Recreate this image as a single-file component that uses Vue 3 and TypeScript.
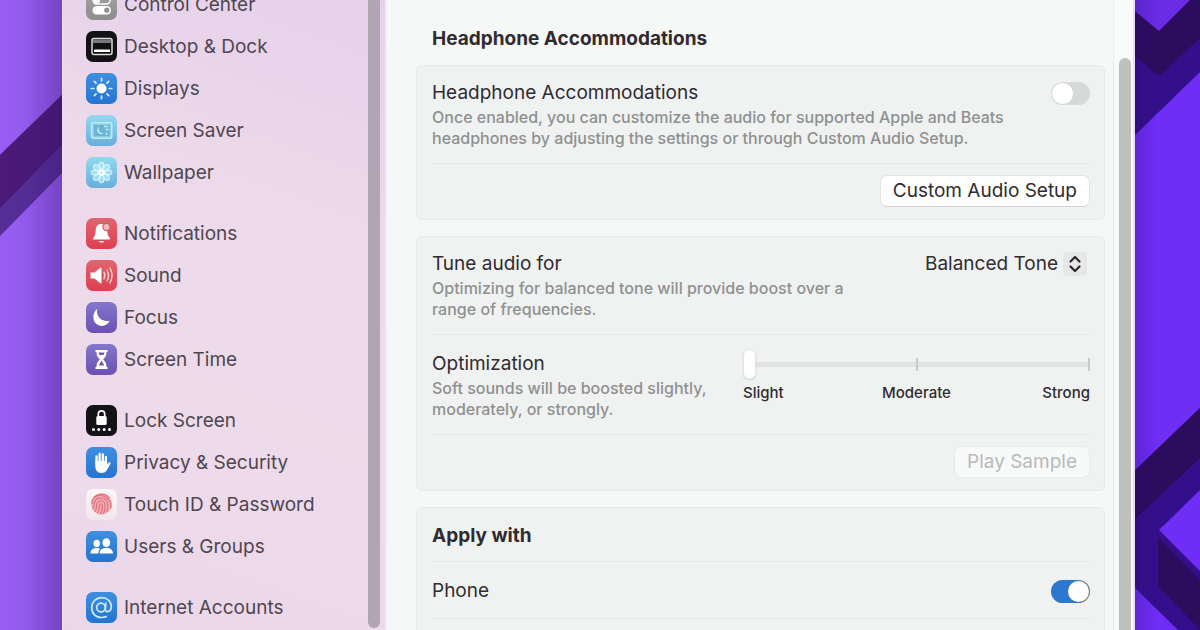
<script setup lang="ts">
import { ref } from 'vue'

type Item = { label: string; icon: string; tone: string }

const groups: Item[][] = [
  [
    { label: 'Control Center', icon: 'control', tone: 'gray' },
    { label: 'Desktop & Dock', icon: 'dock', tone: 'black' },
    { label: 'Displays', icon: 'sun', tone: 'blue' },
    { label: 'Screen Saver', icon: 'saver', tone: 'sky' },
    { label: 'Wallpaper', icon: 'flower', tone: 'sky' },
  ],
  [
    { label: 'Notifications', icon: 'bell', tone: 'red' },
    { label: 'Sound', icon: 'speaker', tone: 'red' },
    { label: 'Focus', icon: 'moon', tone: 'violet' },
    { label: 'Screen Time', icon: 'hourglass', tone: 'violet' },
  ],
  [
    { label: 'Lock Screen', icon: 'lock', tone: 'black' },
    { label: 'Privacy & Security', icon: 'hand', tone: 'blue' },
    { label: 'Touch ID & Password', icon: 'touch', tone: 'white' },
    { label: 'Users & Groups', icon: 'users', tone: 'blue' },
  ],
  [{ label: 'Internet Accounts', icon: 'at', tone: 'blue' }],
]

const rays = [0, 45, 90, 135, 180, 225, 270, 315]
const headphones = ref(false)
const phone = ref(true)
const tone = ref('Balanced Tone')
const level = ref(0)
</script>

<template>
  <div class="desktop">
    <svg class="wallpaper" viewBox="0 0 1200 630" preserveAspectRatio="none" aria-hidden="true">
      <defs>
        <linearGradient id="leftShade" x1="0" x2="1" y1="0" y2="0">
          <stop offset="0" stop-color="#32106a" stop-opacity="0" />
          <stop offset="0.4" stop-color="#32106a" stop-opacity="0.06" />
          <stop offset="1" stop-color="#32106a" stop-opacity="0.36" />
        </linearGradient>
        <linearGradient id="rightShade" x1="0" x2="1" y1="0" y2="0">
          <stop offset="0" stop-color="#2a0a70" stop-opacity="0.3" />
          <stop offset="0.7" stop-color="#2a0a70" stop-opacity="0" />
        </linearGradient>
      </defs>
      <rect width="600" height="630" fill="#985ef4" />
      <path d="M0 155L64 93V171L0 236Z" fill="#562e98" />
      <path d="M0 155L64 93V143L0 208Z" fill="#4b1a78" />
      <rect width="64" height="630" fill="url(#leftShade)" />
      <rect x="600" width="600" height="630" fill="#6f2ef6" />
      <path d="M1130 0H1200V72L1130 140Z" fill="#340f8c" />
      <path d="M1130 0H1200V38L1159 76L1130 52Z" fill="#2c0c5c" />
      <path d="M1130 0H1190L1159 31L1130 7Z" fill="#6a2ce6" />
      <path d="M1130 475L1200 408V630H1178L1130 583Z" fill="#340f8c" />
      <path d="M1130 475L1200 408V458L1130 524Z" fill="#2c0c5c" />
      <path d="M1158 537L1200 580V630L1158 586Z" fill="#2c0c5c" />
      <path d="M1200 490L1159 530L1200 571Z" fill="#6f2ef6" />
      <rect x="1130" width="40" height="630" fill="url(#rightShade)" />
    </svg>

    <div class="window">
      <aside class="sidebar">
        <nav class="nav" aria-label="Settings">
          <ul v-for="(group, g) in groups" :key="g" class="group">
            <li v-for="item in group" :key="item.label">
              <a class="item" href="#">
                <span class="tile" :class="item.tone">
                  <svg viewBox="0 0 31 31" aria-hidden="true">
                    <g v-if="item.icon === 'control'">
                      <rect x="7" y="8" width="17" height="7" rx="3.5" fill="none" stroke="#fff" stroke-width="1.4" />
                      <circle cx="11" cy="11.500" r="3" fill="#fff" />
                      <rect x="6.500" y="17" width="18.500" height="8.500" rx="4.200" fill="#fff" />
                      <circle cx="20.800" cy="21.200" r="2.600" fill="#949292" />
                    </g>
                    <g v-else-if="item.icon === 'dock'">
                      <rect x="6" y="7.500" width="20" height="16" rx="2" fill="#111" stroke="#dcdcdc" stroke-width="1.500" />
                      <rect x="7" y="8.500" width="18" height="3.500" fill="#77777c" />
                      <rect x="8" y="18.500" width="16" height="2.500" rx="0.500" fill="#fff" />
                    </g>
                    <g v-else-if="item.icon === 'sun'">
                      <circle cx="15.500" cy="15.500" r="5" fill="#fff" />
                      <path v-for="r in rays" :key="r" d="M15.500 5.300V7.800" :transform="`rotate(${r} 15.500 15.500)`" stroke="#d9ecff" stroke-width="1.700" stroke-linecap="round" />
                    </g>
                    <g v-else-if="item.icon === 'saver'">
                      <rect x="5.700" y="7.700" width="20" height="15.500" rx="1.500" fill="#8ccbe6" stroke="#b9f0fb" stroke-width="1.500" />
                      <rect x="8" y="10" width="15.500" height="11" fill="#6fb4d8" />
                      <path d="M13 11.500A4.300 4.300 0 1 0 18 18.500A5 5 0 0 1 13 11.500Z" fill="#b9f0fb" />
                      <path d="M18 11.500H22M19.500 14.500H22.500M20.500 17.500V20" stroke="#b9f0fb" stroke-width="1.300" fill="none" />
                    </g>
                    <g v-else-if="item.icon === 'flower'">
                      <ellipse v-for="r in rays" :key="r" cx="15.500" cy="9" rx="2.700" ry="4" :transform="`rotate(${r} 15.500 15.500)`" fill="#b9effb" fill-opacity="0.650" stroke="#e9fdff" stroke-width="0.900" />
                      <circle cx="15.500" cy="15.500" r="3.200" fill="#fff" />
                      <circle cx="15.500" cy="15.500" r="1" fill="#9dcde4" />
                    </g>
                    <g v-else-if="item.icon === 'bell'">
                      <path d="M15 6C11.300 6 9.800 8.800 9.700 12.500C9.600 16.500 8.700 18.300 7 20C6.500 20.700 6.800 21.500 7.800 21.500H23.200C24.200 21.500 24.500 20.700 24 20C22.300 18.300 21.400 16.500 21.300 13.500L18.500 7.500C17.500 6.400 16.500 6 15 6Z" fill="#fff" />
                      <path d="M12.800 23H18.200A2.800 2.400 0 0 1 12.800 23Z" fill="#fff" />
                      <circle cx="20.500" cy="9" r="3.600" fill="#f5b8bf" stroke="#da5763" stroke-width="1.200" />
                    </g>
                    <g v-else-if="item.icon === 'speaker'">
                      <path d="M4.500 12.500H8.500L14.300 7.700C15 7.200 15.500 7.500 15.500 8.200V22.800C15.500 23.500 15 23.800 14.300 23.300L8.500 18.500H4.500Z" fill="#fff" />
                      <path d="M18 12.200Q19.800 15.500 18 18.800M21 10Q24 15.500 21 21M24 8Q28 15.500 24 23" stroke="#fbd3d7" stroke-width="1.400" stroke-linecap="round" fill="none" />
                    </g>
                    <g v-else-if="item.icon === 'moon'">
                      <path d="M11.300 6.700C9.500 14 15.500 20.500 23.700 18.800C21.500 23.500 16.300 25.300 12 23C6.500 20 5.300 11.700 11.300 6.700Z" fill="#fff" />
                    </g>
                    <g v-else-if="item.icon === 'hourglass'">
                      <path d="M9.500 6H21.500V8H20.500C20.500 12.500 18.500 13.700 17.200 15.500C18.500 17.300 20.500 18.500 20.500 23H21.500V25H9.500V23H10.500C10.500 18.500 12.500 17.300 13.800 15.500C12.500 13.700 10.500 12.500 10.500 8H9.500Z" fill="#fff" />
                      <path d="M12.500 8.500H18.500L17.500 11H13.500ZM15.500 16.500L18.300 21.500H12.700Z" fill="#6c5a9e" />
                    </g>
                    <g v-else-if="item.icon === 'lock'">
                      <rect x="10.300" y="11" width="10.400" height="9" rx="1.500" fill="#fff" />
                      <path d="M12.300 12V9A3.200 3.200 0 0 1 18.700 9V12" fill="none" stroke="#fff" stroke-width="1.700" />
                      <circle v-for="x in [7.500, 12.800, 18.200, 23.500]" :key="x" :cx="x" cy="24.500" r="1.500" fill="#fff" />
                    </g>
                    <g v-else-if="item.icon === 'hand'">
                      <path d="M10.500 16V9.300M13.600 15V7M16.800 15V7.300M19.900 16V9.800" stroke="#fff" stroke-width="2.300" stroke-linecap="round" />
                      <path d="M9.300 14H21.100V17.800L22.500 15.800C23.300 14.800 25 15.200 24.500 16.500L21.500 22C20 25 18 26 15.300 26C11.300 26 9.300 23 9.300 19.500Z" fill="#fff" />
                    </g>
                    <g v-else-if="item.icon === 'touch'" fill="none" stroke="#e2707e" stroke-width="1.200" stroke-linecap="round">
                      <circle cx="15.500" cy="15" r="10.500" fill="#f2b0b6" stroke="none" />
                      <path d="M8 8.500A10 10 0 0 1 23 8.500M5.800 14.500C6 6.500 15 4.500 20.500 8.700C24.500 11.500 25.500 16 24.500 19.500M7 19.500C9 16 6.800 13.500 10 10.500C14 7 21.500 9.500 21.800 15.500C22 18 21.500 20.500 20.800 22.500M9 22.200C12 18.500 9 15 12.500 12.500C15.500 10.700 19 12.700 19.200 16C19.300 19 18.500 22 17.500 24.500M11.500 24C14 20.500 12.500 18 13.500 16C14.500 14 16.500 15 16.500 16.700C16.500 19.500 15.700 22.500 14.500 25" />
                    </g>
                    <g v-else-if="item.icon === 'users'" fill="#fff">
                      <ellipse cx="10.700" cy="12.500" rx="3.200" ry="3.700" />
                      <path d="M4.500 22C4.700 18.500 7.500 17 10.700 17C12 17 13.200 17.300 14.200 18C12.800 19.300 12.200 20.500 12.200 22.500H4.500Z" />
                      <ellipse cx="20.300" cy="11.700" rx="3.900" ry="4.400" />
                      <path d="M13.500 22.500C13.500 19 16.300 17 20.300 17S27 19 27 22.500Z" />
                    </g>
                    <g v-else fill="none" stroke="#cfeafd" stroke-width="1.700" stroke-linecap="round">
                      <circle cx="15" cy="15.500" r="4.300" />
                      <path d="M19.800 11.200L19.300 17.300C19.200 21 25.300 20.500 25.300 14.500C25.300 9 21 5.700 15.800 5.700C10 5.700 5.700 9.800 5.700 15.700C5.700 21.700 9.800 25.500 15.700 25.500C17.500 25.500 19 25.200 20.300 24.600" />
                    </g>
                  </svg>
                </span>
                <span>{{ item.label }}</span>
              </a>
            </li>
          </ul>
        </nav>
        <div class="side-thumb"></div>
      </aside>

      <main class="pane">
        <div class="content">
          <h1 class="title">Headphone Accommodations</h1>

          <section class="card">
            <div class="row first">
              <div class="copy">
                <label class="name" for="acc">Headphone Accommodations</label>
                <p class="desc">Once enabled, you can customize the audio for supported Apple and Beats headphones by adjusting the settings or through Custom Audio Setup.</p>
              </div>
              <input id="acc" v-model="headphones" class="switch" type="checkbox" role="switch" />
            </div>
            <div class="row actions">
              <button class="btn" type="button">Custom Audio Setup</button>
            </div>
          </section>

          <section class="card">
            <div class="row first">
              <div class="copy tune">
                <label class="name" for="tone">Tune audio for</label>
                <p class="desc">Optimizing for balanced tone will provide boost over a range of frequencies.</p>
              </div>
              <div class="picker">
                <select id="tone" v-model="tone">
                  <option>Balanced Tone</option>
                </select>
                <svg class="chevrons" viewBox="0 0 24 24" aria-hidden="true">
                  <rect width="24" height="24" rx="5" fill="#e6e7e7" />
                  <path d="M7.500 9.500L12 5L16.500 9.500M7.500 14.500L12 19L16.500 14.500" fill="none" stroke="#2b282c" stroke-width="2.200" stroke-linecap="round" stroke-linejoin="round" />
                </svg>
              </div>
            </div>
            <div class="row second">
              <div class="copy">
                <label class="name" for="level">Optimization</label>
                <p class="desc">Soft sounds will be boosted slightly, moderately, or strongly.</p>
              </div>
              <div class="slider">
                <div class="rail">
                  <input id="level" v-model.number="level" type="range" min="0" max="2" step="1" />
                </div>
                <div class="marks">
                  <span>Slight</span><span>Moderate</span><span>Strong</span>
                </div>
              </div>
            </div>
            <div class="row actions">
              <button class="btn" type="button" disabled>Play Sample</button>
            </div>
          </section>

          <section class="card">
            <div class="row line">
              <h2 class="title">Apply with</h2>
            </div>
            <div class="row line">
              <label class="name" for="phone">Phone</label>
              <input id="phone" v-model="phone" class="switch" type="checkbox" role="switch" />
            </div>
            <div class="row line"></div>
          </section>
        </div>
        <div class="track"><div class="thumb"></div></div>
      </main>
    </div>
  </div>
</template>

<style>
body {
  margin: 0;
  overflow: hidden;
}
</style>

<style scoped>
* {
  box-sizing: border-box;
}
.desktop {
  position: relative;
  height: 100vh;
  overflow: hidden;
  padding: 0 65px 0 62px;
  background: #7a3cf0;
  font-family: Inter, "Liberation Sans", sans-serif;
  color: #2f2b30;
}
.wallpaper {
  position: absolute;
  inset: 0;
  width: 100%;
  height: 100%;
}
.window {
  position: relative;
  display: flex;
  height: 100%;
  overflow: hidden;
  border-left: 1px solid #f1def3;
  border-right: 2px solid #ecdcf6;
  background: #f6f8f7;
}
.sidebar {
  display: flex;
  flex: 0 0 324px;
  justify-content: space-between;
  padding: 0 5px 0 23px;
  background: linear-gradient(200deg, #e5d1eb 0%, #ecd9ea 32%, #eedbea 62%, #ead7ea 100%);
  border-right: 2px solid #f4eaf4;
}
.nav {
  margin-top: -17px;
}
.group {
  list-style: none;
  margin: 0 0 19px;
  padding: 0;
}
.item {
  display: flex;
  align-items: center;
  gap: 7px;
  height: 42px;
  font-size: 19px;
  font-weight: 400;
  color: #4f4650;
  text-decoration: none;
  white-space: nowrap;
}
.tile {
  width: 31px;
  height: 31px;
  border-radius: 7px;
}
.tile svg {
  display: block;
  width: 31px;
  height: 31px;
}
.gray { background: linear-gradient(#a5a3a4, #8f8c8d); }
.black { background: #141216; }
.blue { background: linear-gradient(#3f8fe0, #2474d2); }
.sky { background: linear-gradient(#93d9ee, #69aedb); }
.red { background: linear-gradient(#e26470, #dd3f50); }
.violet { background: linear-gradient(#8377cb, #6c50b2); }
.white { background: linear-gradient(#fbf6f9, #f1e6ee); }
.side-thumb {
  width: 12px;
  margin-bottom: 2px;
  border-radius: 0 0 6px 6px;
  background: #b1a5b5;
}
.pane {
  display: flex;
  flex: 1;
  min-width: 0;
}
.content {
  display: flex;
  flex: 1;
  flex-direction: column;
  gap: 16px;
  min-width: 0;
  padding: 28px 8px 0 29px;
}
.title {
  margin: 0;
  font-size: 19px;
  font-weight: 700;
  line-height: 21px;
}
.content > .title {
  padding-left: 16px;
}
.card {
  padding: 0 14px 0 15px;
  border: 1px solid #e9ebea;
  border-radius: 6px;
  background: #f0f2f1;
}
.row {
  display: flex;
  justify-content: space-between;
}
.row + .row {
  border-top: 1px solid #e5e7e6;
}
.first {
  padding: 15px 0 14px;
}
.second {
  gap: 24px;
  padding: 17px 0 14px;
}
.actions {
  justify-content: flex-end;
  padding: 11px 0 12px;
}
.line {
  align-items: center;
  height: 57px;
  padding-top: 2px;
}
.line:first-child {
  height: 53px;
}
.copy {
  flex: 0 1 600px;
}
.tune {
  flex-basis: 440px;
}
.name {
  display: block;
  font-size: 19px;
  line-height: 24px;
}
.desc {
  margin: 2px 0 0;
  font-size: 16px;
  font-weight: 500;
  line-height: 21px;
  color: #8f9090;
}
.switch {
  appearance: none;
  flex: none;
  display: flex;
  width: 39px;
  height: 23px;
  margin: 1px 0 0;
  padding: 1px;
  border-radius: 12px;
  background: #d7d8d8;
}
.switch::before {
  content: "";
  width: 21px;
  height: 21px;
  border-radius: 50%;
  background: #fff;
}
.switch:checked {
  justify-content: flex-end;
  background: linear-gradient(90deg, #2b77d2 0 60%, #6f7478 85%);
}
.btn {
  height: 32px;
  padding: 0 12px;
  border: 1px solid #e3e4e4;
  border-bottom-color: #d2d3d3;
  border-radius: 7px;
  background: #fff;
  font: 400 19px/24px Inter, "Liberation Sans", sans-serif;
  color: #2f2b30;
}
.btn:disabled {
  border-color: #e9eaea;
  background: #f8f9f9;
  color: #b9baba;
}
.picker {
  position: relative;
  flex: none;
  height: 24px;
  padding-right: 3px;
}
.picker select {
  appearance: none;
  height: 24px;
  padding: 0 29px 0 0;
  border: 0;
  background: transparent;
  font: 400 19px/24px Inter, "Liberation Sans", sans-serif;
  color: #2f2b30;
}
.chevrons {
  position: absolute;
  top: 0;
  right: 3px;
  width: 24px;
  height: 24px;
  pointer-events: none;
}
.slider {
  flex: 0 0 347px;
  margin-top: -3px;
}
.rail {
  height: 30px;
  background:
    linear-gradient(#c9cbca, #c9cbca) 50% 50% / 2px 13px no-repeat,
    linear-gradient(#c9cbca, #c9cbca) 100% 50% / 2px 13px no-repeat,
    linear-gradient(#e1e3e2, #e1e3e2) 0 50% / 100% 5px no-repeat;
}
.rail input {
  appearance: none;
  display: block;
  width: 100%;
  height: 30px;
  margin: 0;
  background: transparent;
}
.rail input::-webkit-slider-thumb {
  appearance: none;
  width: 13px;
  height: 30px;
  border: 1px solid #e3e4e4;
  border-radius: 6px;
  background: #fff;
  box-shadow: 0 1px 2px rgba(0, 0, 0, 0.12);
}
.marks {
  display: grid;
  grid-template-columns: 1fr auto 1fr;
  margin-top: 2px;
  font-size: 15px;
  font-weight: 500;
  line-height: 24px;
}
.marks span:last-child {
  text-align: right;
}
.track {
  flex: 0 0 20px;
  padding: 58px 2px 0 5px;
  border-left: 1px solid #eceeed;
  background: #f9fafa;
}
.thumb {
  height: 100%;
  border-radius: 6px 6px 0 0;
  background: #bfc1bf;
}
</style>
